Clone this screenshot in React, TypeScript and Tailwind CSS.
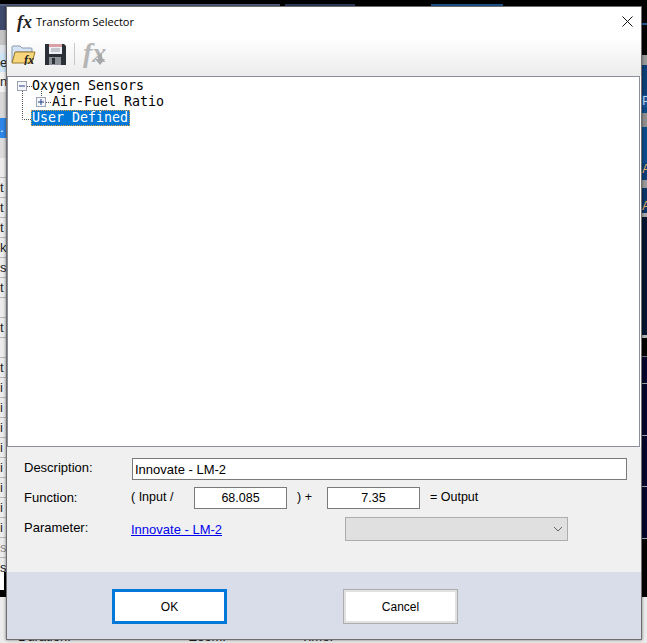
import React from "react";

type Strip = { h: number; bg: string; text?: string; color?: string };

const tableRow = "bg-[#ececec] border-b border-[#b8b8b8]";

// left edge of the app behind the dialog, top to bottom
const leftRows: Strip[] = [
  { h: 4, bg: "bg-black" },
  { h: 26, bg: "bg-[#3d4a6b]" },
  { h: 15, bg: "bg-[#c4c4c4]" },
  { h: 8, bg: "bg-[#dfe3ea]" },
  { h: 19, bg: "bg-[#cfe4f5]", text: "e" },
  { h: 20, bg: "bg-[#f2f2f2]", text: "n" },
  { h: 26, bg: "bg-[#d9d9d9]" },
  { h: 20, bg: "bg-[#2f86e6]", text: ".", color: "text-white" },
  { h: 20, bg: "bg-[#dcdcdc]" },
  ...["", "t", "t", "t", "k", "s", "t", "", "t", "", "t", "i", "i", "i", "i", "i", "i", "i", "i"].map((text) => ({
    h: 20,
    bg: tableRow,
    text,
  })),
  { h: 20, bg: tableRow, text: "s", color: "text-[#888]" },
  { h: 14, bg: "bg-[#ececec]", text: "s" },
  { h: 18, bg: "bg-white border-r-[3px] border-black" },
  { h: 7, bg: "bg-black" },
  { h: 46, bg: "bg-[#ececec]" },
];

const rightRows: Strip[] = [
  { h: 23, bg: "bg-black" },
  { h: 2, bg: "bg-[#1d5a96]" },
  { h: 30, bg: "bg-black" },
  { h: 10, bg: "bg-[#9a9a9a]" },
  { h: 30, bg: "bg-[#0c3f78]" },
  { h: 12, bg: "bg-[#14539a]", text: "Pa" },
  { h: 6, bg: "bg-[#0d4a8c]" },
  { h: 14, bg: "bg-[#8f8f8f]" },
  { h: 36, bg: "bg-[#0d4a8c]" },
  { h: 12, bg: "bg-[#0b3f78]", text: "A", color: "text-[#e0b070]" },
  { h: 5, bg: "bg-[#0b3f78]" },
  { h: 8, bg: "bg-[#9a9a9a]" },
  { h: 12, bg: "bg-[#0a3566]" },
  { h: 13, bg: "bg-[#0a3566]", text: "A", color: "text-[#e0b070]" },
  { h: 4, bg: "bg-[#a8a8a8]" },
  { h: 118, bg: "bg-[#04162f]" },
  { h: 3, bg: "bg-[#b5b5b5]" },
  { h: 19, bg: "bg-black border-b border-[#777]" },
  { h: 27, bg: "bg-[#04052a] border-b border-[#99aaaa]" },
  { h: 52, bg: "bg-[#04052a] border-b border-[#99aaaa]" },
  { h: 51, bg: "bg-[#04052a] border-b border-[#99aaaa]" },
  { h: 52, bg: "bg-[#04052a] border-b border-[#99aaaa]" },
  { h: 58, bg: "bg-black" },
  { h: 46, bg: "bg-[#ececec]" },
];

const TreeLines = () => (
  <svg className="absolute left-0 top-0" width="160" height="60" fill="none" stroke="#555" strokeDasharray="1 1">
    <path d="M14.5 14v28.5H24" />
    <path d="M19 9.500h5" />
    <path d="M33.500 14v7" />
    <path d="M38 25.500h6" />
  </svg>
);

const Expander = ({ open, className }: { open: boolean; className: string }) => (
  <svg className={className} width="10" height="10" viewBox="0 0 10 10">
    <rect x="0.500" y="0.500" width="9" height="9" fill="#f6f7fb" stroke="#9ba3b5" />
    <path d={open ? "M2 5h6" : "M2 5h6M5 2v6"} stroke="#1f3c88" strokeWidth="1" />
  </svg>
);

const FolderIcon = () => (
  <svg width="25" height="22" viewBox="0 0 25 22">
    <path d="M1 19V4q0-1 1-1h7l2 2h9q1 0 1 1v3H5z" fill="#d6e4f5" stroke="#8a98ad" />
    <path d="M1 20 4 9h20l-3 11z" fill="#f7d77e" stroke="#9a7a28" />
    <text x="13" y="21" fontFamily="'Liberation Serif', serif" fontStyle="italic" fontWeight="700" fontSize="12" fill="#222">
      fx
    </text>
  </svg>
);

const SaveIcon = () => (
  <svg width="23" height="24" viewBox="0 0 23 24">
    <path d="M1 2h19l2 2v19H1z" fill="#2b3037" />
    <rect x="5" y="2" width="13" height="3" fill="#d9a0a8" />
    <rect x="5" y="5" width="13" height="7" fill="#eef0f3" />
    <path d="M7 7h9M7 9h9" stroke="#9aa0a8" />
    <rect x="5" y="15" width="12" height="8" fill="#8e9298" />
    <rect x="8" y="16" width="3" height="6" fill="#2b3037" />
  </svg>
);

export default function App() {
  return (
    <div className="relative w-[647px] h-[643px] overflow-hidden bg-[#ececec] font-['Liberation_Sans',sans-serif]">
      {/* app window behind the dialog */}
      <div className="flex justify-between h-full">
        <div className="w-[7px] overflow-hidden">
          {leftRows.map((row, i) => (
            <div key={i} className={`${row.bg} ${row.color ?? "text-[#222]"} text-[13px] leading-[20px] overflow-hidden`} style={{ height: row.h }}>
              {row.text}
            </div>
          ))}
        </div>
        <div className="w-[5px] overflow-hidden">
          {rightRows.map((row, i) => (
            <div key={i} className={`${row.bg} ${row.color ?? "text-[#bcd8f5]"} text-[13px] leading-[12px] overflow-hidden`} style={{ height: row.h }}>
              {row.text}
            </div>
          ))}
        </div>
      </div>
      <div className="absolute left-0 right-0 top-0 h-[6px] bg-black flex items-end">
        <div className="w-[280px] h-[2px] bg-[#56617f]" />
        <div className="w-[70px] h-[2px] ml-[5px] bg-[#2f3f60]" />
        <div className="w-[72px] h-[2px] ml-[76px] bg-[#1d5a96]" />
      </div>
      <div className="absolute left-[18px] right-0 bottom-0 h-[3px] overflow-hidden">
        <div className="flex text-[13px] leading-[13px] text-[#222] -mt-[10px]">
          <span className="w-[171px]">Duration:</span>
          <span className="w-[112px]">Zoom:</span>
          <span>Time:</span>
        </div>
      </div>

      {/* Transform Selector dialog */}
      <div className="absolute left-[6px] top-[6px] w-[636px] h-[634px] border border-[#6e6e6e] bg-white flex flex-col shadow-[0_0_3px_rgba(0,0,0,0.5)]">
        <div className="h-[30px] shrink-0 flex items-center bg-white pl-[10px] pr-[8px]">
          <span className="w-[19px] font-['Liberation_Serif',serif] italic font-bold text-[18px] leading-none text-[#222]">fx</span>
          <span className="text-[11px] text-black font-['Open_Sans',sans-serif]">Transform Selector</span>
          <svg className="ml-auto -mt-[1px]" width="11" height="11" viewBox="0 0 11 11" stroke="#111">
            <path d="M0.500 0.500l10 10M10.500 0.500l-10 10" />
          </svg>
        </div>

        <div className="h-[39px] shrink-0 flex items-center pl-[4px] pb-[6px] bg-gradient-to-b from-white to-[#ececec]">
          <FolderIcon />
          <div className="ml-[8px]">
            <SaveIcon />
          </div>
          <div className="ml-[7px] w-px h-[22px] bg-[#c8c8c8]" />
          <div className="relative ml-[8px] w-[24px] h-[24px]">
            <span className="font-['Liberation_Serif',serif] italic font-bold text-[28px] leading-[22px] text-[#b5b5b5]">fx</span>
            <svg className="absolute left-[11px] top-[12px]" width="12" height="12" viewBox="0 0 12 12">
              <path d="M4 0h4v5h3l-5 6-5-6h3z" fill="#a8a8a8" />
            </svg>
          </div>
        </div>

        <div className="relative h-[371px] shrink-0 border border-[#8a8f9a] mr-px bg-white pt-[1px] font-['DejaVu_Sans_Mono',monospace] text-[13.300px] leading-[16px] text-black">
          <TreeLines />
          <div className="relative flex items-center h-[16px] pl-[9px]">
            <Expander open className="shrink-0" />
            <span className="ml-[5px] -mt-px">Oxygen Sensors</span>
          </div>
          <div className="relative flex items-center h-[16px] pl-[28px]">
            <Expander open={false} className="shrink-0" />
            <span className="ml-[6px] -mt-px">Air-Fuel Ratio</span>
          </div>
          <div className="relative flex items-center h-[16px] pl-[23px]">
            <span className="pl-px pr-[2px] bg-[#0078d7] text-white outline-1 outline-dotted outline-[#e0a040] -outline-offset-1">User Defined</span>
          </div>
        </div>

        <div className="flex-1 bg-[#f0f0f0] pl-[17px] pr-[14px] pt-[11px] text-[13px] leading-none text-black">
          <div className="flex items-center h-[22px]">
            <span className="w-[108px] -mt-[4px]">Description:</span>
            <input
              readOnly
              value="Innovate - LM-2"
              className="flex-1 h-[22px] border border-[#7a7a7a] bg-white px-[2px] text-[13px] outline-none"
            />
          </div>
          <div className="flex items-center h-[22px] mt-[7px]">
            <span className="w-[107px] -mt-[2px]">Function:</span>
            <span className="w-[63px] -mt-[2px] text-[12.500px]">( Input /</span>
            <input
              readOnly
              value="68.085"
              className="w-[93px] h-[22px] border border-[#7a7a7a] bg-white text-center text-[12.500px] outline-none"
            />
            <span className="w-[40px] -mt-[2px] pl-[10px] text-[12.500px]">) +</span>
            <input
              readOnly
              value="7.35"
              className="w-[93px] h-[22px] border border-[#7a7a7a] bg-white text-center text-[12.500px] outline-none"
            />
            <span className="ml-[10px] -mt-[2px] text-[12.500px]">= Output</span>
          </div>
          <div className="flex items-center h-[24px] mt-[8px]">
            <span className="w-[107px] -mt-[3px]">Parameter:</span>
            <a href="#" className="w-[214px] text-[#0000ee] underline">
              Innovate - LM-2
            </a>
            <div className="w-[223px] h-[24px] flex items-center justify-end pr-[4px] bg-[#e0e0e0] border border-[#adadad]">
              <svg width="10" height="6" viewBox="0 0 10 6" fill="none" stroke="#606060">
                <path d="M1 1l4 4 4-4" />
              </svg>
            </div>
          </div>
        </div>

        <div className="h-[67px] shrink-0 bg-[#d9ddea] flex items-start pt-[17px] pl-[105px] text-[12px] text-black">
          <button className="w-[115px] h-[35px] bg-white border-[3px] border-[#0078d7]">OK</button>
          <button className="w-[115px] h-[35px] ml-[116px] bg-white border border-[#adadad] outline-2 outline-[#e1e1e1] -outline-offset-3">Cancel</button>
        </div>
      </div>
    </div>
  );
}
